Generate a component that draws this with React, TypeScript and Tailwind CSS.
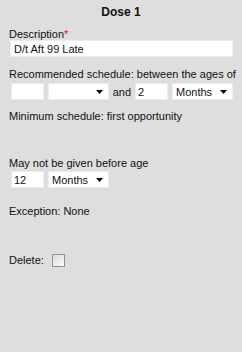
import React from "react";

const Caret = () => (
  <svg width="7" height="4" viewBox="0 0 7 4" className="shrink-0">
    <path d="M0 0h7L3.5 4z" fill="#000" />
  </svg>
);

const Select = ({ value, w }: { value?: string; w: string }) => (
  <div className={`flex h-[17px] ${w} items-center justify-between bg-white border border-[#ececec] pl-[3px] pr-[5px]`}>
    <span>{value}</span>
    <Caret />
  </div>
);

const Input = ({ value, w }: { value?: string; w: string }) => (
  <div className={`flex h-[17px] ${w} items-center bg-white border border-[#ececec] pl-[2px]`}>
    {value}
  </div>
);

export default function App() {
  return (
    <div
      className="w-[242px] h-[352px] bg-[#dedede] text-[11px] leading-[14px] text-[#111]"
      style={{ fontFamily: "'Liberation Sans', Arial, sans-serif" }}
    >
      <div className="pt-[5px] text-center font-bold text-[12px]">Dose 1</div>

      <div className="pl-[9px] pr-[9px]">
        <div className="mt-[8px]">
          Description<span className="text-[#e01010]">*</span>
        </div>
        <div className="mt-[-1px] ml-[1px] flex h-[17px] w-[223px] items-center bg-white border border-[#ececec] pl-[3px]">
          D/t Aft 99 Late
        </div>

        <div className="mt-[10px] whitespace-nowrap">Recommended schedule: between the ages of</div>
        <div className="mt-[2px] ml-[2px] flex items-center">
          <Input w="w-[33px]" />
          <div className="ml-[4px]"><Select w="w-[61px]" /></div>
          <span className="ml-[4px]">and</span>
          <div className="ml-[4px]"><Input value="2" w="w-[33px]" /></div>
          <div className="ml-[4px]"><Select value="Months" w="w-[61px]" /></div>
        </div>

        <div className="mt-[9px]">Minimum schedule: first opportunity</div>

        <div className="mt-[33px]">May not be given before age</div>
        <div className="mt-[1px] ml-[2px] flex items-center">
          <Input value="12" w="w-[33px]" />
          <div className="ml-[4px]"><Select value="Months" w="w-[61px]" /></div>
        </div>

        <div className="mt-[16px]">Exception: None</div>

        <div className="mt-[35px] flex items-center">
          <span>Delete:</span>
          <span className="ml-[8px] h-[13px] w-[13px] border border-[#8e8f8f] bg-gradient-to-br from-[#dcdcdc] to-[#fbfbfb]" />
        </div>
      </div>
    </div>
  );
}
